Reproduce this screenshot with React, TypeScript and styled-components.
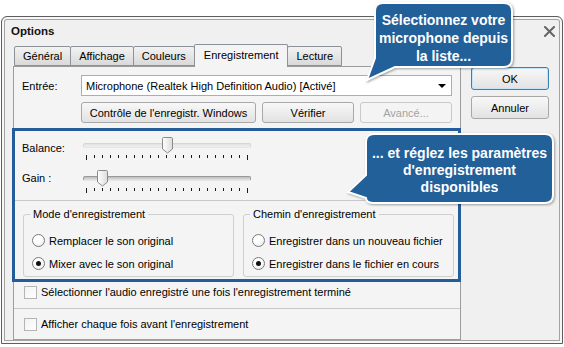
import React from 'react';
import styled, { createGlobalStyle } from 'styled-components';

const GlobalStyle = createGlobalStyle`
  html, body {
    margin: 0;
    padding: 0;
    background: #ffffff;
  }
  body {
    font-family: "Liberation Sans", Arial, sans-serif;
    font-size: 11px;
    color: #000;
  }
`;

const Stage = styled.div`
  position: relative;
  width: 564px;
  height: 347px;
  padding: 16px 1px 0 1px;
  box-sizing: border-box;
  overflow: hidden;
`;

const Window = styled.div`
  width: 562px;
  height: 328px;
  box-sizing: border-box;
  border: 1px solid #5e5e5e;
  border-radius: 6px 6px 0 0;
  background: #f0f0f0;
  box-shadow: inset 0 0 0 2px #f7f7f7, inset 0 0 0 3px #a3a3a3;
  display: flex;
  flex-direction: column;
`;

const TitleBar = styled.div`
  height: 28px;
  display: flex;
  align-items: center;
  justify-content: space-between;
  padding: 0 6px 0 9px;
`;

const Title = styled.span`
  font-weight: bold;
  font-size: 11.5px;
  color: #111;
`;

const CloseButton = styled.div`
  width: 14px;
  height: 14px;
  display: flex;
  align-items: center;
  justify-content: center;
`;

const Body = styled.div`
  display: flex;
  padding: 1px 0 0 11px;
  gap: 10px;
`;

const LeftColumn = styled.div`
  width: 448px;
  display: flex;
  flex-direction: column;
`;

const TabRow = styled.div`
  display: flex;
  height: 20px;
  align-items: flex-end;
  padding-left: 1px;
  position: relative;
  z-index: 1;
`;

const Tab = styled.div<{ $active?: boolean }>`
  box-sizing: border-box;
  height: ${(p) => (p.$active ? '23px' : '20px')};
  margin-bottom: ${(p) => (p.$active ? '-1px' : '0')};
  padding: ${(p) => (p.$active ? '3px 9px 0' : '2px 8px 0')};
  margin-left: -1px;
  border: 1px solid #8d9198;
  border-bottom: ${(p) => (p.$active ? 'none' : '1px solid #8d9198')};
  border-radius: 2px 2px 0 0;
  background: ${(p) => (p.$active ? '#f4f4f4' : 'linear-gradient(#f2f2f2, #d9d9d9)')};
  line-height: 15px;
  white-space: nowrap;
  &:first-child {
    margin-left: 0;
  }
`;

const Panel = styled.div`
  box-sizing: border-box;
  height: 274px;
  border: 1px solid #9a9ca0;
  background: #f4f4f4;
  display: flex;
  flex-direction: column;
`;

const InputRow = styled.div`
  display: flex;
  align-items: center;
  margin-top: 8px;
  padding-left: 8px;
  height: 21px;
`;

const FieldLabel = styled.span`
  width: 59px;
`;

const Combo = styled.div`
  box-sizing: border-box;
  width: 371px;
  height: 21px;
  border: 1px solid #abadb3;
  background: #fff;
  display: flex;
  align-items: center;
  justify-content: space-between;
  padding: 0 5px 0 4px;
`;

const ComboArrow = styled.span`
  width: 0;
  height: 0;
  border-left: 4px solid transparent;
  border-right: 4px solid transparent;
  border-top: 4px solid #000;
`;

const ButtonRow = styled.div`
  display: flex;
  gap: 6px;
  margin: 6px 0 0 67px;
`;

const Button = styled.div<{ $width: number; $disabled?: boolean; $default?: boolean }>`
  box-sizing: border-box;
  width: ${(p) => p.$width}px;
  height: ${(p) => (p.$default !== undefined ? '23px' : '21px')};
  border: 1px solid ${(p) => (p.$disabled ? '#c9c9c9' : p.$default ? '#3c7fb1' : '#a8a8a8')};
  border-radius: 3px;
  background: ${(p) => (p.$disabled ? '#f4f4f4' : 'linear-gradient(#f8f8f8, #e2e2e2)')};
  color: ${(p) => (p.$disabled ? '#a3a3a3' : '#000')};
  box-shadow: ${(p) => (p.$default ? 'inset 0 0 0 1px #c6e4f7' : 'none')};
  display: flex;
  align-items: center;
  justify-content: center;
  white-space: nowrap;
`;

const Highlight = styled.div`
  box-sizing: border-box;
  height: 154px;
  margin: 5px -1px 0 -2px;
  border: 3px solid #245e9a;
  display: flex;
  flex-direction: column;
`;

const SliderRow = styled.div<{ $first?: boolean }>`
  display: flex;
  align-items: flex-start;
  margin-top: ${(p) => (p.$first ? '6px' : '9px')};
  padding-left: 7px;
  height: 24px;
`;

const SliderLabel = styled.span<{ $offset: number }>`
  width: 61px;
  padding-top: ${(p) => p.$offset}px;
`;

const SliderBox = styled.div`
  position: relative;
  width: 168px;
  height: 24px;
  display: flex;
  flex-direction: column;
`;

const Track = styled.div<{ $dark?: boolean }>`
  box-sizing: border-box;
  margin-top: 6px;
  height: 5px;
  border-radius: 2px;
  border: 1px solid ${(p) => (p.$dark ? '#9a9a9a' : '#d6d6d6')};
  border-bottom-color: #e6e6e6;
  background: ${(p) => (p.$dark ? 'linear-gradient(#bcbcbc, #e4e4e4)' : 'linear-gradient(#e2e2e2, #f0f0f0)')};
`;

const Ticks = styled.div`
  display: flex;
  justify-content: space-between;
  align-items: flex-start;
  margin-top: 7px;
  padding: 0 3px;
`;

const Tick = styled.span<{ $long?: boolean }>`
  width: 1px;
  height: ${(p) => (p.$long ? '5px' : '3px')};
  background: #1a1a1a;
`;

const Thumb = styled.svg`
  position: absolute;
  top: 0;
`;

const Separator = styled.div<{ $gap?: number }>`
  height: 1px;
  margin-top: ${(p) => p.$gap ?? 0}px;
  background: #c8c8c8;
`;

const GroupRow = styled.div`
  display: flex;
  gap: 9px;
  margin: 7px 0 0 8px;
`;

const Group = styled.fieldset`
  box-sizing: border-box;
  margin: 0;
  width: 211px;
  height: 69px;
  padding: 8px 8px 0;
  border: 1px solid #cfcfcf;
  border-radius: 3px;
  min-width: 0;
  display: flex;
  flex-direction: column;
`;

const Legend = styled.legend`
  padding: 0 3px;
  margin-left: -2px;
  line-height: 13px;
`;

const OptionRow = styled.label`
  display: flex;
  align-items: center;
  gap: 4px;
  height: 23px;
  white-space: nowrap;
`;

const Radio = styled.span<{ $checked?: boolean }>`
  box-sizing: border-box;
  width: 13px;
  height: 13px;
  border-radius: 50%;
  border: 1px solid #7b7b7b;
  background: radial-gradient(circle at 40% 35%, #ffffff 40%, #e2e2e2);
  display: flex;
  align-items: center;
  justify-content: center;
  &::after {
    content: '';
    width: 5px;
    height: 5px;
    border-radius: 50%;
    background: ${(p) => (p.$checked ? '#111' : 'transparent')};
  }
`;

const CheckRow = styled.label<{ $height: number; $lift?: number }>`
  box-sizing: border-box;
  display: flex;
  align-items: center;
  gap: 4px;
  height: ${(p) => p.$height}px;
  padding-left: 10px;
  padding-bottom: ${(p) => p.$lift ?? 0}px;
`;

const CheckBox = styled.span`
  box-sizing: border-box;
  width: 13px;
  height: 13px;
  border: 1px solid #b5b5b5;
  background: linear-gradient(135deg, #f2f2f2, #ffffff);
`;

const RightColumn = styled.div`
  display: flex;
  flex-direction: column;
  gap: 6px;
  padding-top: 21px;
`;

const Callout = styled.div`
  position: absolute;
`;

const Bubble = styled.svg`
  position: absolute;
  left: 0;
  top: 0;
  filter: drop-shadow(1px 1px 1px rgba(0, 0, 0, 0.35));
`;

const CalloutText = styled.div<{ $lineHeight: number }>`
  position: absolute;
  color: #fff;
  font-weight: bold;
  font-size: 14px;
  line-height: ${(p) => p.$lineHeight}px;
  text-align: center;
  white-space: nowrap;
`;

type SliderProps = { value: number; max: number; dark?: boolean };

function Slider({ value, max, dark }: SliderProps) {
  const x = 3 + (value / max) * 162;
  return (
    <SliderBox>
      <Track $dark={dark} />
      <Ticks>
        {Array.from({ length: max + 1 }).map((_, i) => (
          <Tick key={i} $long={i === 0 || i === max} />
        ))}
      </Ticks>
      <Thumb width="11" height="17" viewBox="0 0 11 17" style={{ left: x - 5 }}>
        <defs>
          <linearGradient id={`thumb-${value}`} x1="0" y1="0" x2="1" y2="0">
            <stop offset="0" stopColor="#ffffff" />
            <stop offset="1" stopColor="#dcdcdc" />
          </linearGradient>
        </defs>
        <path
          d="M1.5 0.5 H9.5 Q10.5 0.5 10.5 1.5 V12 L5.5 16 L0.5 12 V1.5 Q0.5 0.5 1.5 0.5 Z"
          fill={`url(#thumb-${value})`}
          stroke="#8a8a8a"
        />
      </Thumb>
    </SliderBox>
  );
}

const tabs = ['Général', 'Affichage', 'Couleurs', 'Enregistrement', 'Lecture'];

export default function App() {
  return (
    <Stage>
      <GlobalStyle />
      <Window>
        <TitleBar>
          <Title>Options</Title>
          <CloseButton>
            <svg width="11" height="11" viewBox="0 0 11 11">
              <path d="M1 1 L10 10 M10 1 L1 10" stroke="#666" strokeWidth="2" strokeLinecap="square" />
            </svg>
          </CloseButton>
        </TitleBar>
        <Body>
          <LeftColumn>
            <TabRow>
              {tabs.map((t) => (
                <Tab key={t} $active={t === 'Enregistrement'}>
                  {t}
                </Tab>
              ))}
            </TabRow>
            <Panel>
              <InputRow>
                <FieldLabel>Entrée:</FieldLabel>
                <Combo>
                  <span>Microphone (Realtek High Definition Audio) [Activé]</span>
                  <ComboArrow />
                </Combo>
              </InputRow>
              <ButtonRow>
                <Button $width={175}>Contrôle de l'enregistr. Windows</Button>
                <Button $width={92}>Vérifier</Button>
                <Button $width={92} $disabled>
                  Avancé...
                </Button>
              </ButtonRow>
              <Highlight>
                <SliderRow $first>
                  <SliderLabel $offset={5}>Balance:</SliderLabel>
                  <Slider value={10} max={20} />
                </SliderRow>
                <SliderRow>
                  <SliderLabel $offset={2}>Gain :</SliderLabel>
                  <Slider value={2} max={20} dark />
                </SliderRow>
                <Separator $gap={6} />
                <GroupRow>
                  <Group>
                    <Legend>Mode d'enregistrement</Legend>
                    <OptionRow>
                      <Radio />
                      Remplacer le son original
                    </OptionRow>
                    <OptionRow>
                      <Radio $checked />
                      Mixer avec le son original
                    </OptionRow>
                  </Group>
                  <Group>
                    <Legend>Chemin d'enregistrement</Legend>
                    <OptionRow>
                      <Radio />
                      Enregistrer dans un nouveau fichier
                    </OptionRow>
                    <OptionRow>
                      <Radio $checked />
                      Enregistrer dans le fichier en cours
                    </OptionRow>
                  </Group>
                </GroupRow>
              </Highlight>
              <CheckRow $height={26} $lift={6}>
                <CheckBox />
                Sélectionner l'audio enregistré une fois l'enregistrement terminé
              </CheckRow>
              <Separator />
              <CheckRow $height={30}>
                <CheckBox />
                Afficher chaque fois avant l'enregistrement
              </CheckRow>
            </Panel>
          </LeftColumn>
          <RightColumn>
            <Button $width={78} $default>
              OK
            </Button>
            <Button $width={78} $default={false}>
              Annuler
            </Button>
          </RightColumn>
        </Body>
      </Window>

      <Callout style={{ left: 362, top: 0, width: 156, height: 86 }}>
        <Bubble width="156" height="86" viewBox="0 0 156 86">
          <path
            d="M21 3 H142 Q150 3 150 11 V59 Q150 67 142 67 H33 L5 80 L13 58 V11 Q13 3 21 3 Z"
            fill="#22609a"
            stroke="#ffffff"
            strokeWidth="2"
          />
        </Bubble>
        <CalloutText $lineHeight={18} style={{ left: 13, top: 11, width: 137 }}>
          Sélectionnez votre
          <br />
          microphone depuis
          <br />
          la liste...
        </CalloutText>
      </Callout>

      <Callout style={{ left: 343, top: 128, width: 216, height: 84 }}>
        <Bubble width="216" height="84" viewBox="0 0 216 84">
          <path
            d="M31 6 H202 Q210 6 210 14 V67 Q210 75 202 75 H31 Q23 75 23 70 L5 64 L23 47 V14 Q23 6 31 6 Z"
            fill="#22609a"
            stroke="#ffffff"
            strokeWidth="2"
          />
        </Bubble>
        <CalloutText $lineHeight={17} style={{ left: 23, top: 17, width: 187 }}>
          ... et réglez les paramètres
          <br />
          d'enregistrement
          <br />
          disponibles
        </CalloutText>
      </Callout>
    </Stage>
  );
}
